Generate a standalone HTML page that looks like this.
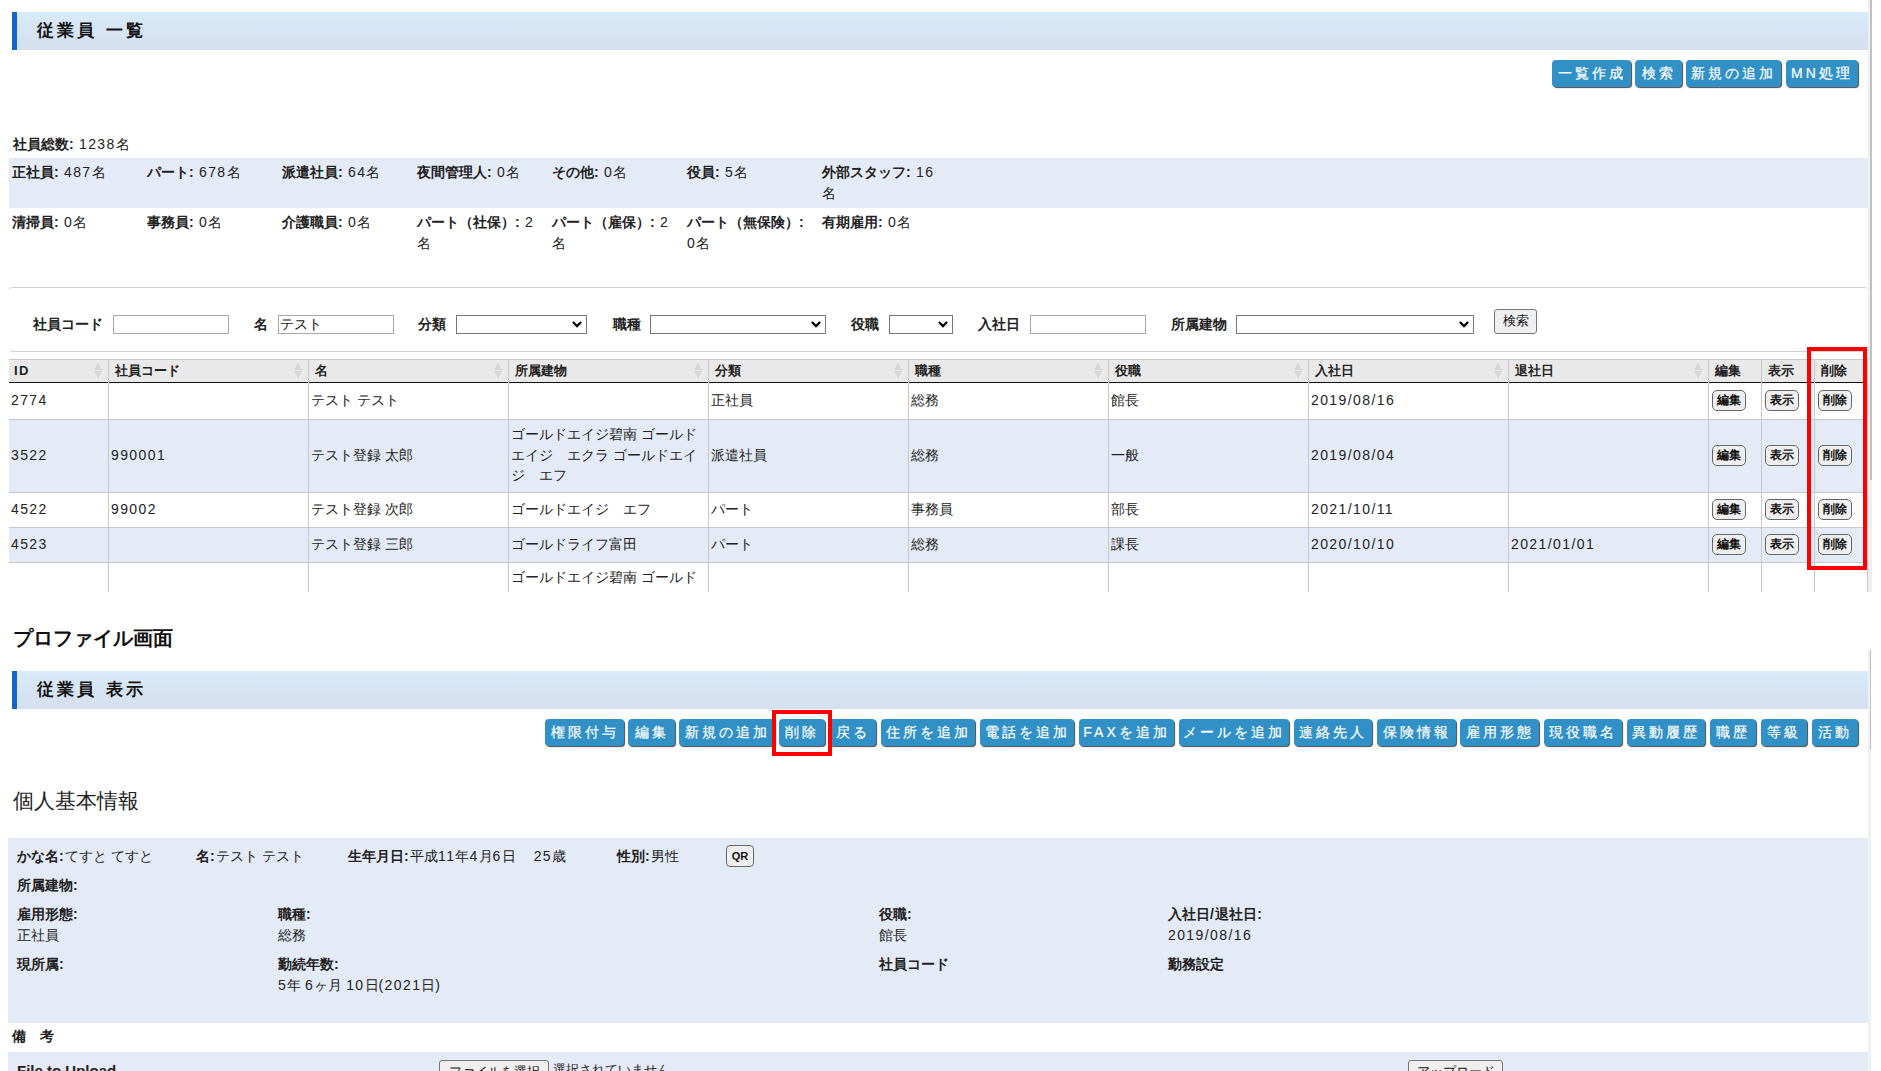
<!DOCTYPE html>
<html><head><meta charset="utf-8"><style>
html,body{margin:0;padding:0;background:#fff}
body{width:1881px;height:1071px;overflow:hidden;position:relative;font-family:"Liberation Sans",sans-serif;color:#222}
.t{position:absolute;white-space:nowrap}
.r{position:absolute;box-sizing:border-box}
.bb{position:absolute;box-sizing:border-box;background:#3191c7;color:#fff;border-radius:4px;text-align:center;font-size:14px;letter-spacing:3px;box-shadow:1px 1px 1px rgba(30,30,30,.8);white-space:nowrap;-webkit-text-stroke:.2px #fff}
.gb{position:absolute;box-sizing:border-box;background:#efefef;color:#111;border:1px solid #666;border-radius:5px;text-align:center;font-weight:bold;white-space:nowrap}
.hbar{position:absolute;box-sizing:border-box;border-left:5px solid #1565c8;background:linear-gradient(#d8eaf9,#d5dff0)}
.sel{position:absolute;box-sizing:border-box;border:1px solid #767676;background:#fff}
.inp{position:absolute;box-sizing:border-box;border:1px solid #a9a9a9;background:#fff}
.arr{position:absolute;width:8px;height:15px}
.a{letter-spacing:.1em}
</style></head><body>

<div class="hbar" style="left:12px;top:12px;width:1856px;height:38px"></div>
<div class="t" style="left:37px;top:21px;font-size:17px;line-height:20px;font-weight:bold;color:#111;letter-spacing:3.2px">従業員&nbsp;一覧</div>
<div class="bb" style="left:1552px;top:60px;width:79px;height:27px;line-height:27px">一覧作成</div>
<div class="bb" style="left:1635px;top:60px;width:47px;height:27px;line-height:27px">検索</div>
<div class="bb" style="left:1686px;top:60px;width:95px;height:27px;line-height:27px">新規の追加</div>
<div class="bb" style="left:1786px;top:60px;width:72px;height:27px;line-height:27px">MN処理</div>
<div class="t" style="left:13px;top:134px;font-size:14px;line-height:20px;color:#222;"><b>社員総数<span class="a">:</span></b> <span class="a">1238</span>名</div>
<div class="r" style="left:9px;top:158px;width:1859px;height:50px;background:#e4ebf7"></div>
<div class="t" style="left:12px;top:162px;font-size:14px;line-height:21px;color:#222;"><b>正社員<span class="a">:</span></b> <span class="a">487</span>名</div>
<div class="t" style="left:12px;top:212px;font-size:14px;line-height:21px;color:#222;"><b>清掃員<span class="a">:</span></b> <span class="a">0</span>名</div>
<div class="t" style="left:147px;top:162px;font-size:14px;line-height:21px;color:#222;"><b>パート<span class="a">:</span></b> <span class="a">678</span>名</div>
<div class="t" style="left:147px;top:212px;font-size:14px;line-height:21px;color:#222;"><b>事務員<span class="a">:</span></b> <span class="a">0</span>名</div>
<div class="t" style="left:282px;top:162px;font-size:14px;line-height:21px;color:#222;"><b>派遣社員<span class="a">:</span></b> <span class="a">64</span>名</div>
<div class="t" style="left:282px;top:212px;font-size:14px;line-height:21px;color:#222;"><b>介護職員<span class="a">:</span></b> <span class="a">0</span>名</div>
<div class="t" style="left:417px;top:162px;font-size:14px;line-height:21px;color:#222;"><b>夜間管理人<span class="a">:</span></b> <span class="a">0</span>名</div>
<div class="t" style="left:417px;top:212px;font-size:14px;line-height:21px;color:#222;"><b>パート（社保）<span class="a">:</span></b> <span class="a">2</span><br>名</div>
<div class="t" style="left:552px;top:162px;font-size:14px;line-height:21px;color:#222;"><b>その他<span class="a">:</span></b> <span class="a">0</span>名</div>
<div class="t" style="left:552px;top:212px;font-size:14px;line-height:21px;color:#222;"><b>パート（雇保）<span class="a">:</span></b> <span class="a">2</span><br>名</div>
<div class="t" style="left:687px;top:162px;font-size:14px;line-height:21px;color:#222;"><b>役員<span class="a">:</span></b> <span class="a">5</span>名</div>
<div class="t" style="left:687px;top:212px;font-size:14px;line-height:21px;color:#222;"><b>パート（無保険）<span class="a">:</span></b><br><span class="a">0</span>名</div>
<div class="t" style="left:822px;top:162px;font-size:14px;line-height:21px;color:#222;"><b>外部スタッフ<span class="a">:</span></b> <span class="a">16</span><br>名</div>
<div class="t" style="left:822px;top:212px;font-size:14px;line-height:21px;color:#222;"><b>有期雇用<span class="a">:</span></b> <span class="a">0</span>名</div>
<div class="r" style="left:9px;top:287px;width:1859px;height:65px;border-top:1px solid #d0d0d0;border-bottom:1px solid #d0d0d0;border-radius:4px"></div>
<div class="t" style="left:33px;top:314px;font-size:14px;line-height:20px;font-weight:bold;color:#222;">社員コード</div>
<div class="inp" style="left:113px;top:315px;width:116px;height:19px"></div>
<div class="t" style="left:254px;top:314px;font-size:14px;line-height:20px;font-weight:bold;color:#222;">名</div>
<div class="inp" style="left:278px;top:315px;width:116px;height:19px"></div>
<div class="t" style="left:280px;top:314px;font-size:14px;line-height:20px;color:#111;">テスト</div>
<div class="t" style="left:418px;top:314px;font-size:14px;line-height:20px;font-weight:bold;color:#222;">分類</div>
<div class="sel" style="left:456px;top:315px;width:131px;height:19px"></div>
<svg style="position:absolute;left:572px;top:321px" width="10" height="8" viewBox="0 0 10 8"><path d="M0.9 1.0 L5 5.1 L9.1 1.0" fill="none" stroke="#000" stroke-width="2.2"/></svg>
<div class="t" style="left:613px;top:314px;font-size:14px;line-height:20px;font-weight:bold;color:#222;">職種</div>
<div class="sel" style="left:650px;top:315px;width:176px;height:19px"></div>
<svg style="position:absolute;left:811px;top:321px" width="10" height="8" viewBox="0 0 10 8"><path d="M0.9 1.0 L5 5.1 L9.1 1.0" fill="none" stroke="#000" stroke-width="2.2"/></svg>
<div class="t" style="left:851px;top:314px;font-size:14px;line-height:20px;font-weight:bold;color:#222;">役職</div>
<div class="sel" style="left:889px;top:315px;width:64px;height:19px"></div>
<svg style="position:absolute;left:938px;top:321px" width="10" height="8" viewBox="0 0 10 8"><path d="M0.9 1.0 L5 5.1 L9.1 1.0" fill="none" stroke="#000" stroke-width="2.2"/></svg>
<div class="t" style="left:978px;top:314px;font-size:14px;line-height:20px;font-weight:bold;color:#222;">入社日</div>
<div class="inp" style="left:1030px;top:315px;width:116px;height:19px"></div>
<div class="t" style="left:1171px;top:314px;font-size:14px;line-height:20px;font-weight:bold;color:#222;">所属建物</div>
<div class="sel" style="left:1236px;top:315px;width:238px;height:19px"></div>
<svg style="position:absolute;left:1459px;top:321px" width="10" height="8" viewBox="0 0 10 8"><path d="M0.9 1.0 L5 5.1 L9.1 1.0" fill="none" stroke="#000" stroke-width="2.2"/></svg>
<div class="gb" style="left:1494px;top:309px;width:43px;height:25px;line-height:21px;font-size:13px;font-weight:normal;border-radius:3px;border-color:#767676">検索</div>
<div class="r" style="left:9px;top:359px;width:1858px;height:24px;background:#e9e9e9;border-top:1px solid #c8c8c8;border-bottom:1px solid #111"></div>
<div class="t" style="left:14px;top:361px;font-size:13px;line-height:20px;font-weight:bold;color:#222;"><span class="a">ID</span></div>
<svg class="arr" style="left:94px;top:363px" viewBox="0 0 8 15"><path d="M4 0 L8 7 L0 7Z M0 8 L8 8 L4 15Z" fill="#d6d6d6"/></svg>
<div class="t" style="left:115px;top:361px;font-size:13px;line-height:20px;font-weight:bold;color:#222;">社員コード</div>
<svg class="arr" style="left:294px;top:363px" viewBox="0 0 8 15"><path d="M4 0 L8 7 L0 7Z M0 8 L8 8 L4 15Z" fill="#d6d6d6"/></svg>
<div class="t" style="left:315px;top:361px;font-size:13px;line-height:20px;font-weight:bold;color:#222;">名</div>
<svg class="arr" style="left:494px;top:363px" viewBox="0 0 8 15"><path d="M4 0 L8 7 L0 7Z M0 8 L8 8 L4 15Z" fill="#d6d6d6"/></svg>
<div class="t" style="left:515px;top:361px;font-size:13px;line-height:20px;font-weight:bold;color:#222;">所属建物</div>
<svg class="arr" style="left:694px;top:363px" viewBox="0 0 8 15"><path d="M4 0 L8 7 L0 7Z M0 8 L8 8 L4 15Z" fill="#d6d6d6"/></svg>
<div class="t" style="left:715px;top:361px;font-size:13px;line-height:20px;font-weight:bold;color:#222;">分類</div>
<svg class="arr" style="left:894px;top:363px" viewBox="0 0 8 15"><path d="M4 0 L8 7 L0 7Z M0 8 L8 8 L4 15Z" fill="#d6d6d6"/></svg>
<div class="t" style="left:915px;top:361px;font-size:13px;line-height:20px;font-weight:bold;color:#222;">職種</div>
<svg class="arr" style="left:1094px;top:363px" viewBox="0 0 8 15"><path d="M4 0 L8 7 L0 7Z M0 8 L8 8 L4 15Z" fill="#d6d6d6"/></svg>
<div class="t" style="left:1115px;top:361px;font-size:13px;line-height:20px;font-weight:bold;color:#222;">役職</div>
<svg class="arr" style="left:1294px;top:363px" viewBox="0 0 8 15"><path d="M4 0 L8 7 L0 7Z M0 8 L8 8 L4 15Z" fill="#d6d6d6"/></svg>
<div class="t" style="left:1315px;top:361px;font-size:13px;line-height:20px;font-weight:bold;color:#222;">入社日</div>
<svg class="arr" style="left:1494px;top:363px" viewBox="0 0 8 15"><path d="M4 0 L8 7 L0 7Z M0 8 L8 8 L4 15Z" fill="#d6d6d6"/></svg>
<div class="t" style="left:1515px;top:361px;font-size:13px;line-height:20px;font-weight:bold;color:#222;">退社日</div>
<svg class="arr" style="left:1694px;top:363px" viewBox="0 0 8 15"><path d="M4 0 L8 7 L0 7Z M0 8 L8 8 L4 15Z" fill="#d6d6d6"/></svg>
<div class="t" style="left:1715px;top:361px;font-size:13px;line-height:20px;font-weight:bold;color:#222;">編集</div>
<div class="t" style="left:1768px;top:361px;font-size:13px;line-height:20px;font-weight:bold;color:#222;">表示</div>
<div class="t" style="left:1821px;top:361px;font-size:13px;line-height:20px;font-weight:bold;color:#222;">削除</div>
<div class="r" style="left:9px;top:419px;width:1858px;height:1px;background:#c8c8c8"></div>
<div class="r" style="left:9px;top:420px;width:1858px;height:72px;background:#e4ebf7"></div>
<div class="r" style="left:9px;top:492px;width:1858px;height:1px;background:#c8c8c8"></div>
<div class="r" style="left:9px;top:527px;width:1858px;height:1px;background:#c8c8c8"></div>
<div class="r" style="left:9px;top:528px;width:1858px;height:34px;background:#e4ebf7"></div>
<div class="r" style="left:9px;top:562px;width:1858px;height:1px;background:#c8c8c8"></div>
<div class="r" style="left:108px;top:359px;width:1px;height:233px;background:#c8c8c8"></div>
<div class="r" style="left:308px;top:359px;width:1px;height:233px;background:#c8c8c8"></div>
<div class="r" style="left:508px;top:359px;width:1px;height:233px;background:#c8c8c8"></div>
<div class="r" style="left:708px;top:359px;width:1px;height:233px;background:#c8c8c8"></div>
<div class="r" style="left:908px;top:359px;width:1px;height:233px;background:#c8c8c8"></div>
<div class="r" style="left:1108px;top:359px;width:1px;height:233px;background:#c8c8c8"></div>
<div class="r" style="left:1308px;top:359px;width:1px;height:233px;background:#c8c8c8"></div>
<div class="r" style="left:1508px;top:359px;width:1px;height:233px;background:#c8c8c8"></div>
<div class="r" style="left:1708px;top:359px;width:1px;height:233px;background:#c8c8c8"></div>
<div class="r" style="left:1761px;top:359px;width:1px;height:233px;background:#c8c8c8"></div>
<div class="r" style="left:1814px;top:359px;width:1px;height:233px;background:#c8c8c8"></div>
<div class="r" style="left:1867px;top:359px;width:1px;height:233px;background:#c8c8c8"></div>
<div class="t" style="left:11px;top:390px;font-size:14px;line-height:20.5px;color:#222;"><span class="a">2774</span></div>
<div class="t" style="left:311px;top:390px;font-size:14px;line-height:20.5px;color:#222;">テスト テスト</div>
<div class="t" style="left:711px;top:390px;font-size:14px;line-height:20.5px;color:#222;">正社員</div>
<div class="t" style="left:911px;top:390px;font-size:14px;line-height:20.5px;color:#222;">総務</div>
<div class="t" style="left:1111px;top:390px;font-size:14px;line-height:20.5px;color:#222;">館長</div>
<div class="t" style="left:1311px;top:390px;font-size:14px;line-height:20.5px;color:#222;"><span class="a">2019/08/16</span></div>
<div class="gb" style="left:1712px;top:390px;width:34px;height:21px;line-height:19px;font-size:12px">編集</div>
<div class="gb" style="left:1765px;top:390px;width:34px;height:21px;line-height:19px;font-size:12px">表示</div>
<div class="gb" style="left:1818px;top:390px;width:34px;height:21px;line-height:19px;font-size:12px">削除</div>
<div class="t" style="left:11px;top:445px;font-size:14px;line-height:20.5px;color:#222;"><span class="a">3522</span></div>
<div class="t" style="left:111px;top:445px;font-size:14px;line-height:20.5px;color:#222;"><span class="a">990001</span></div>
<div class="t" style="left:311px;top:445px;font-size:14px;line-height:20.5px;color:#222;">テスト登録 太郎</div>
<div class="t" style="left:511px;top:424px;font-size:14px;line-height:20.5px;color:#222;">ゴールドエイジ碧南 ゴールド<br>エイジ　エクラ ゴールドエイ<br>ジ　エフ</div>
<div class="t" style="left:711px;top:445px;font-size:14px;line-height:20.5px;color:#222;">派遣社員</div>
<div class="t" style="left:911px;top:445px;font-size:14px;line-height:20.5px;color:#222;">総務</div>
<div class="t" style="left:1111px;top:445px;font-size:14px;line-height:20.5px;color:#222;">一般</div>
<div class="t" style="left:1311px;top:445px;font-size:14px;line-height:20.5px;color:#222;"><span class="a">2019/08/04</span></div>
<div class="gb" style="left:1712px;top:445px;width:34px;height:21px;line-height:19px;font-size:12px">編集</div>
<div class="gb" style="left:1765px;top:445px;width:34px;height:21px;line-height:19px;font-size:12px">表示</div>
<div class="gb" style="left:1818px;top:445px;width:34px;height:21px;line-height:19px;font-size:12px">削除</div>
<div class="t" style="left:11px;top:499px;font-size:14px;line-height:20.5px;color:#222;"><span class="a">4522</span></div>
<div class="t" style="left:111px;top:499px;font-size:14px;line-height:20.5px;color:#222;"><span class="a">99002</span></div>
<div class="t" style="left:311px;top:499px;font-size:14px;line-height:20.5px;color:#222;">テスト登録 次郎</div>
<div class="t" style="left:511px;top:499px;font-size:14px;line-height:20.5px;color:#222;">ゴールドエイジ　エフ</div>
<div class="t" style="left:711px;top:499px;font-size:14px;line-height:20.5px;color:#222;">パート</div>
<div class="t" style="left:911px;top:499px;font-size:14px;line-height:20.5px;color:#222;">事務員</div>
<div class="t" style="left:1111px;top:499px;font-size:14px;line-height:20.5px;color:#222;">部長</div>
<div class="t" style="left:1311px;top:499px;font-size:14px;line-height:20.5px;color:#222;"><span class="a">2021/10/11</span></div>
<div class="gb" style="left:1712px;top:499px;width:34px;height:21px;line-height:19px;font-size:12px">編集</div>
<div class="gb" style="left:1765px;top:499px;width:34px;height:21px;line-height:19px;font-size:12px">表示</div>
<div class="gb" style="left:1818px;top:499px;width:34px;height:21px;line-height:19px;font-size:12px">削除</div>
<div class="t" style="left:11px;top:534px;font-size:14px;line-height:20.5px;color:#222;"><span class="a">4523</span></div>
<div class="t" style="left:311px;top:534px;font-size:14px;line-height:20.5px;color:#222;">テスト登録 三郎</div>
<div class="t" style="left:511px;top:534px;font-size:14px;line-height:20.5px;color:#222;">ゴールドライフ富田</div>
<div class="t" style="left:711px;top:534px;font-size:14px;line-height:20.5px;color:#222;">パート</div>
<div class="t" style="left:911px;top:534px;font-size:14px;line-height:20.5px;color:#222;">総務</div>
<div class="t" style="left:1111px;top:534px;font-size:14px;line-height:20.5px;color:#222;">課長</div>
<div class="t" style="left:1311px;top:534px;font-size:14px;line-height:20.5px;color:#222;"><span class="a">2020/10/10</span></div>
<div class="t" style="left:1511px;top:534px;font-size:14px;line-height:20.5px;color:#222;"><span class="a">2021/01/01</span></div>
<div class="gb" style="left:1712px;top:534px;width:34px;height:21px;line-height:19px;font-size:12px">編集</div>
<div class="gb" style="left:1765px;top:534px;width:34px;height:21px;line-height:19px;font-size:12px">表示</div>
<div class="gb" style="left:1818px;top:534px;width:34px;height:21px;line-height:19px;font-size:12px">削除</div>
<div style="position:absolute;left:0;top:563px;width:1881px;height:29px;overflow:hidden">
<div class="t" style="left:511px;top:4px;font-size:14px;line-height:20.5px;color:#222;">ゴールドエイジ碧南 ゴールド<br>エイジ　エクラ ゴールドエイ</div>
</div>
<div class="r" style="left:1868px;top:0px;width:4px;height:592px;background:#f0f0f0"></div>
<div class="r" style="left:1870px;top:0px;width:2px;height:480px;background:#c1c1c1"></div>
<div class="r" style="left:1807px;top:347px;width:60px;height:223px;border:4px solid #f00"></div>
<div class="t" style="left:13px;top:623px;font-size:20px;line-height:30px;font-weight:bold;color:#111;font-weight:600">プロファイル画面</div>
<div class="r" style="left:1868px;top:650px;width:3px;height:421px;background:#f0f0f0"></div>
<div class="r" style="left:1870px;top:650px;width:1px;height:100px;background:#c1c1c1"></div>
<div class="hbar" style="left:12px;top:671px;width:1856px;height:38px"></div>
<div class="t" style="left:37px;top:680px;font-size:17px;line-height:20px;font-weight:bold;color:#111;letter-spacing:3.2px">従業員&nbsp;表示</div>
<div class="bb" style="left:545px;top:719px;width:79px;height:27px;line-height:27px">権限付与</div>
<div class="bb" style="left:628px;top:719px;width:47px;height:27px;line-height:27px">編集</div>
<div class="bb" style="left:679px;top:719px;width:96px;height:27px;line-height:27px">新規の追加</div>
<div class="bb" style="left:779px;top:719px;width:46px;height:27px;line-height:27px">削除</div>
<div class="bb" style="left:829px;top:719px;width:47px;height:27px;line-height:27px">戻る</div>
<div class="bb" style="left:881px;top:719px;width:94px;height:27px;line-height:27px">住所を追加</div>
<div class="bb" style="left:980px;top:719px;width:94px;height:27px;line-height:27px">電話を追加</div>
<div class="bb" style="left:1079px;top:719px;width:95px;height:27px;line-height:27px">FAXを追加</div>
<div class="bb" style="left:1179px;top:719px;width:110px;height:27px;line-height:27px">メールを追加</div>
<div class="bb" style="left:1294px;top:719px;width:78px;height:27px;line-height:27px">連絡先人</div>
<div class="bb" style="left:1377px;top:719px;width:79px;height:27px;line-height:27px">保険情報</div>
<div class="bb" style="left:1460px;top:719px;width:79px;height:27px;line-height:27px">雇用形態</div>
<div class="bb" style="left:1544px;top:719px;width:78px;height:27px;line-height:27px">現役職名</div>
<div class="bb" style="left:1627px;top:719px;width:78px;height:27px;line-height:27px">異動履歴</div>
<div class="bb" style="left:1710px;top:719px;width:46px;height:27px;line-height:27px">職歴</div>
<div class="bb" style="left:1761px;top:719px;width:46px;height:27px;line-height:27px">等級</div>
<div class="bb" style="left:1812px;top:719px;width:46px;height:27px;line-height:27px">活動</div>
<div class="r" style="left:772px;top:710px;width:60px;height:46px;border:4px solid #f00"></div>
<div class="t" style="left:13px;top:786px;font-size:21px;line-height:30px;color:#222;">個人基本情報</div>
<div class="r" style="left:8px;top:838px;width:1860px;height:185px;background:#e4ebf7"></div>
<div class="t" style="left:17px;top:846px;font-size:14px;line-height:20px;color:#222;"><b>かな名<span class="a">:</span></b>てすと てすと</div>
<div class="t" style="left:196px;top:846px;font-size:14px;line-height:20px;color:#222;"><b>名<span class="a">:</span></b>テスト テスト</div>
<div class="t" style="left:348px;top:846px;font-size:14px;line-height:20px;color:#222;"><b>生年月日<span class="a">:</span></b>平成<span class="a">11</span>年<span class="a">4</span>月<span class="a">6</span>日　 <span class="a">25</span>歳</div>
<div class="t" style="left:617px;top:846px;font-size:14px;line-height:20px;color:#222;"><b>性別<span class="a">:</span></b>男性</div>
<div class="gb" style="left:726px;top:845px;width:28px;height:22px;line-height:20px;font-size:11px;border-radius:4px">QR</div>
<div class="t" style="left:17px;top:875px;font-size:14px;line-height:20px;color:#222;"><b>所属建物<span class="a">:</span></b></div>
<div class="t" style="left:17px;top:904px;font-size:14px;line-height:21px;color:#222;"><b>雇用形態<span class="a">:</span></b><br>正社員</div>
<div class="t" style="left:278px;top:904px;font-size:14px;line-height:21px;color:#222;"><b>職種<span class="a">:</span></b><br>総務</div>
<div class="t" style="left:879px;top:904px;font-size:14px;line-height:21px;color:#222;"><b>役職<span class="a">:</span></b><br>館長</div>
<div class="t" style="left:1168px;top:904px;font-size:14px;line-height:21px;color:#222;"><b>入社日<span class="a">/</span>退社日<span class="a">:</span></b><br><span class="a">2019/08/16</span></div>
<div class="t" style="left:17px;top:954px;font-size:14px;line-height:21px;color:#222;"><b>現所属<span class="a">:</span></b></div>
<div class="t" style="left:278px;top:954px;font-size:14px;line-height:21px;color:#222;"><b>勤続年数<span class="a">:</span></b><br><span class="a">5</span>年 <span class="a">6</span>ヶ月 <span class="a">10</span>日<span class="a">(2021</span>日<span class="a">)</span></div>
<div class="t" style="left:879px;top:954px;font-size:14px;line-height:21px;color:#222;"><b>社員コード</b></div>
<div class="t" style="left:1168px;top:954px;font-size:14px;line-height:21px;color:#222;"><b>勤務設定</b></div>
<div class="t" style="left:12px;top:1026px;font-size:14px;line-height:20px;color:#222;"><b>備　考</b></div>
<div class="r" style="left:8px;top:1052px;width:1860px;height:19px;background:#e4ebf7"></div>
<div class="t" style="left:17px;top:1061px;font-size:15px;line-height:20px;color:#222;"><b>File to Upload</b></div>
<div class="gb" style="left:439px;top:1060px;width:110px;height:24px;font-weight:normal;font-size:13px;border-color:#767676;border-radius:3px;line-height:22px">ファイルを選択</div>
<div class="t" style="left:553px;top:1060px;font-size:13px;line-height:20px;color:#222;">選択されていません</div>
<div class="gb" style="left:1408px;top:1060px;width:95px;height:24px;font-weight:normal;font-size:13px;border-color:#767676;border-radius:3px;line-height:22px">アップロード</div>
</body></html>
